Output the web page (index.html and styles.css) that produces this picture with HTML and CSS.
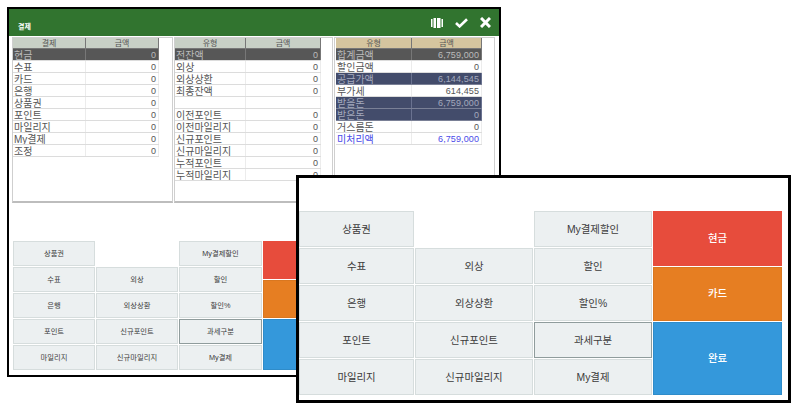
FILE: index.html
```html
<!DOCTYPE html>
<html lang="ko">
<head>
    <meta charset="UTF-8">
    <title>결제</title>
    <link rel="stylesheet" href="styles.css">
</head>
<body>
    <div class="window">
        <div class="titlebar">
            <span class="title">결제</span>
            <div class="tools">
                <svg width="12" height="10" viewBox="0 0 12 10"><path fill="#fff" d="M0 1h1.5v8H0zM2.5 0H5v10H2.5zM6 0h3.5v10H6zM10.5 1H12v8h-1.5z"/></svg>
                <svg width="13" height="10" viewBox="0 0 13 10"><path fill="none" stroke="#fff" stroke-width="2.6" d="M1 5l3.6 3.4L12 1.2"/></svg>
                <svg width="11" height="11" viewBox="0 0 11 11"><path fill="none" stroke="#fff" stroke-width="3" d="M1 1l9 9M10 1l-9 9"/></svg>
            </div>
        </div>

        <div class="panels">
            <!-- 결제 -->
            <div class="panel wide">
                <table class="grid pay">
                    <thead><tr><th>결제</th><th>금액</th></tr></thead>
                    <tbody>
                        <tr class="dark"><td>현금</td><td>0</td></tr>
                        <tr><td>수표</td><td>0</td></tr>
                        <tr><td>카드</td><td>0</td></tr>
                        <tr><td>은행</td><td>0</td></tr>
                        <tr><td>상품권</td><td>0</td></tr>
                        <tr><td>포인트</td><td>0</td></tr>
                        <tr><td>마일리지</td><td>0</td></tr>
                        <tr><td>My결제</td><td>0</td></tr>
                        <tr><td>조정</td><td>0</td></tr>
                    </tbody>
                </table>
            </div>

            <!-- 잔액 -->
            <div class="panel">
                <table class="grid balance">
                    <thead><tr><th>유형</th><th>금액</th></tr></thead>
                    <tbody>
                        <tr class="dark"><td>전잔액</td><td>0</td></tr>
                        <tr><td>외상</td><td>0</td></tr>
                        <tr><td>외상상환</td><td>0</td></tr>
                        <tr><td>최종잔액</td><td>0</td></tr>
                        <tr><td></td><td></td></tr>
                        <tr><td>이전포인트</td><td>0</td></tr>
                        <tr><td>이전마일리지</td><td>0</td></tr>
                        <tr><td>신규포인트</td><td>0</td></tr>
                        <tr><td>신규마일리지</td><td>0</td></tr>
                        <tr><td>누적포인트</td><td>0</td></tr>
                        <tr><td>누적마일리지</td><td>0</td></tr>
                    </tbody>
                </table>
            </div>

            <!-- 합계 -->
            <div class="panel wide">
                <table class="grid total">
                    <thead><tr><th>유형</th><th>금액</th></tr></thead>
                    <tbody>
                        <tr class="dark"><td>합계금액</td><td>6,759,000</td></tr>
                        <tr><td>할인금액</td><td>0</td></tr>
                        <tr class="navy"><td>공급가액</td><td>6,144,545</td></tr>
                        <tr><td>부가세</td><td>614,455</td></tr>
                        <tr class="navy"><td>받을돈</td><td>6,759,000</td></tr>
                        <tr class="navy"><td>받은돈</td><td>0</td></tr>
                        <tr><td>거스름돈</td><td>0</td></tr>
                        <tr class="unpaid"><td>미처리액</td><td>6,759,000</td></tr>
                    </tbody>
                </table>
            </div>
        </div>

        <div class="keys keys-small">
            <button class="key">상품권</button>
            <span class="key-gap"></span>
            <button class="key">My결제할인</button>
            <button class="key red">현금</button>
            <button class="key">수표</button>
            <button class="key">외상</button>
            <button class="key">할인</button>
            <button class="key orange">카드</button>
            <button class="key">은행</button>
            <button class="key">외상상환</button>
            <button class="key">할인%</button>
            <button class="key">포인트</button>
            <button class="key">신규포인트</button>
            <button class="key active">과세구분</button>
            <button class="key blue">완료</button>
            <button class="key">마일리지</button>
            <button class="key">신규마일리지</button>
            <button class="key">My결제</button>
        </div>
    </div>

    <!-- enlarged keypad over the window -->
    <div class="zoom-box">
        <div class="keys keys-large">
            <button class="key">상품권</button>
            <span class="key-gap"></span>
            <button class="key">My결제할인</button>
            <button class="key red">현금</button>
            <button class="key">수표</button>
            <button class="key">외상</button>
            <button class="key">할인</button>
            <button class="key orange">카드</button>
            <button class="key">은행</button>
            <button class="key">외상상환</button>
            <button class="key">할인%</button>
            <button class="key">포인트</button>
            <button class="key">신규포인트</button>
            <button class="key active">과세구분</button>
            <button class="key blue">완료</button>
            <button class="key">마일리지</button>
            <button class="key">신규마일리지</button>
            <button class="key">My결제</button>
        </div>
    </div>
</body>
</html>
```

FILE: styles.css
```css
html, body {
    margin: 0;
    height: 100%;
    overflow: hidden;
}
body {
    background-color: white;
    font-family: "Liberation Sans", "Noto Sans CJK KR", sans-serif;
    color: #555;
}
.window {
    width: 494px;
    height: 370px;
    margin: 7px;
    border: 2px solid black;
    box-sizing: border-box;
    background-color: white;
}
.titlebar {
    height: 27px;
    background-color: #31742f;
    display: flex;
    align-items: center;
    justify-content: space-between;
    padding: 0 8px 0 9px;
}
.title {
    color: white;
    font-size: 7px;
    font-weight: bold;
    margin-top: 7px;
}
.tools {
    display: flex;
    align-items: center;
    gap: 12px;
}
.tools svg {
    display: block;
}
.panels {
    display: flex;
    gap: 1px;
    margin: 1px 0 0 3px;
}
.panel {
    width: 159px;
    height: 166px;
    box-sizing: border-box;
    border: 1px solid #cfcfcf;
    border-bottom: 2px solid #bdbdbd;
}
.panel.wide {
    width: 161px;
}
.grid {
    border-collapse: collapse;
    table-layout: fixed;
    font-size: 10px;
    line-height: 9px;
}
.grid th {
    height: 10px;
    padding: 0;
    font-size: 8px;
    font-weight: normal;
    line-height: 9px;
    background-color: #c8d0c6;
    border-right: 1px solid #777;
    border-bottom: 1px solid #777;
}
.grid td {
    height: 11.67px;
    padding: 2px 1px 0;
    box-sizing: border-box;
    overflow: hidden;
    white-space: nowrap;
    border-bottom: 1px solid #dcdcdc;
    border-right: 1px solid #ececec;
}
.grid td + td {
    text-align: right;
    font-size: 9px;
    letter-spacing: 0.1px;
    padding-right: 2px;
}
.pay {
    width: 146px;
}
.pay th:first-child {
    width: 72px;
}
.balance {
    width: 146px;
}
.balance th:first-child {
    width: 70px;
}
.total {
    width: 146px;
    margin-left: 1px;
}
.total th {
    background-color: #d5c59f;
}
.total th:first-child {
    width: 75px;
}
.dark td {
    background-color: #575757;
    color: #bbb;
    border-right-color: #777;
}
.navy td {
    background-color: #434c6b;
    color: #a3a9bd;
    border-bottom-color: #7a8096;
    border-right-color: #6a7290;
}
.unpaid td {
    color: #4a4ae8;
}
.keys {
    display: grid;
    gap: 1px;
}
.keys-small {
    grid-template-columns: 82px 82px 83px 90px;
    grid-template-rows: repeat(10, 12px);
    margin: 38px 0 0 4px;
}
.keys-large {
    grid-template-columns: 115px 118px 118px 129px;
    grid-template-rows: repeat(10, 17.5px);
    margin-top: 33px;
}
.key {
    grid-row: span 2;
    padding: 0 0 2px;
    font-family: inherit;
    color: #3c3c3c;
    background-color: #ecf0f1;
    border: 1px solid #d6dddd;
    border-radius: 0;
}
.key-gap {
    grid-row: span 2;
}
.keys-small .key {
    font-size: 7.3px;
}
.keys-large .key {
    font-size: 10.4px;
}
.key.active {
    border-color: #8f9c9c;
}
.key.red, .key.orange, .key.blue {
    color: white;
    font-weight: 500;
}
.key.red {
    grid-row: span 3;
    background-color: #e74c3c;
    border-color: #e74c3c;
}
.key.orange {
    grid-row: span 3;
    background-color: #e67e22;
    border-color: #d97720;
}
.key.blue {
    grid-row: span 4;
    background-color: #3498db;
    border-color: #2f8cc9;
}
.zoom-box {
    position: absolute;
    left: 296px;
    top: 175px;
    width: 495px;
    height: 228px;
    box-sizing: border-box;
    border: 3px solid black;
    background-color: white;
}
```
